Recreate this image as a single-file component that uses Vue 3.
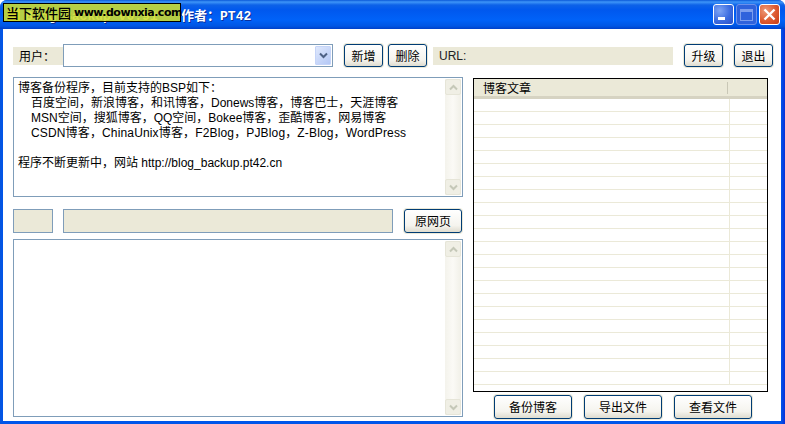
<script setup>
const intro = [
  { text: '博客备份程序，目前支持的BSP如下：', kind: '' },
  { text: '百度空间，新浪博客，和讯博客，Donews博客，博客巴士，天涯博客', kind: 'indent' },
  { text: 'MSN空间，搜狐博客，QQ空间，Bokee博客，歪酷博客，网易博客', kind: 'indent' },
  { text: 'CSDN博客，ChinaUnix博客，F2Blog，PJBlog，Z-Blog，WordPress', kind: 'indent wide' },
  { text: '\u00a0', kind: '' },
  { text: '程序不断更新中，网站 http://blog_backup.pt42.cn', kind: '' }
]
const rows = Array.from({ length: 22 }, (_, i) => i)
</script>

<template>
  <div class="window">
    <header class="titlebar">
      <svg class="app-icon" width="16" height="16" viewBox="0 0 16 16"><rect x="2" y="2" width="12" height="12" fill="#e8c94a"/></svg>
      <span class="title">Blog Backup v0.91 &nbsp;&nbsp;作者：PT42</span>
      <div class="controls">
        <button class="wc wc-min"><i></i></button>
        <button class="wc wc-max"><i></i></button>
        <button class="wc wc-close">
          <svg width="13" height="13" viewBox="0 0 13 13"><path d="M1.5 1.5l10 10M11.5 1.5l-10 10" stroke="#fff" stroke-width="2.4" fill="none"/></svg>
        </button>
      </div>
      <div class="stamp"><span class="stamp-name">当下软件园</span><span class="stamp-url">www.downxia.com</span></div>
    </header>

    <main class="client">
      <section class="toolbar">
        <label class="user-label">用户：</label>
        <div class="combo">
          <span class="combo-btn">
            <svg width="9" height="7" viewBox="0 0 9 7"><path d="M1 1.5l3.5 3.5L8 1.5" stroke="#4d6185" stroke-width="2" fill="none"/></svg>
          </span>
        </div>
        <button class="btn small first">新增</button>
        <button class="btn small">删除</button>
        <div class="url">URL:</div>
        <button class="btn small upgrade">升级</button>
        <button class="btn small exit">退出</button>
      </section>

      <section class="panes">
        <div class="left">
          <div class="textbox intro">
            <div class="text">
              <div v-for="(l, i) in intro" :key="i" :class="l.kind">{{ l.text }}</div>
            </div>
            <div class="scroll">
              <span class="arrow"><svg width="9" height="7" viewBox="0 0 9 7"><path d="M1 5.5L4.5 2 8 5.5" stroke="#c5c8b8" stroke-width="2" fill="none"/></svg></span>
              <span class="arrow"><svg width="9" height="7" viewBox="0 0 9 7"><path d="M1 1.5L4.5 5 8 1.5" stroke="#c5c8b8" stroke-width="2" fill="none"/></svg></span>
            </div>
          </div>
          <div class="midrow">
            <div class="field f1"></div>
            <div class="field f2"></div>
            <button class="btn page">原网页</button>
          </div>
          <div class="textbox content">
            <div class="text"></div>
            <div class="scroll">
              <span class="arrow"><svg width="9" height="7" viewBox="0 0 9 7"><path d="M1 5.5L4.5 2 8 5.5" stroke="#c5c8b8" stroke-width="2" fill="none"/></svg></span>
              <span class="arrow"><svg width="9" height="7" viewBox="0 0 9 7"><path d="M1 1.5L4.5 5 8 1.5" stroke="#c5c8b8" stroke-width="2" fill="none"/></svg></span>
            </div>
          </div>
        </div>

        <div class="right">
          <div class="list">
            <div class="list-head">
              <span class="col-a">博客文章</span>
              <span class="col-b"></span>
            </div>
            <div class="list-body">
              <div v-for="r in rows" :key="r" class="list-row"><span class="cell-a"></span><span class="cell-b"></span></div>
            </div>
          </div>
          <div class="actions">
            <button class="btn action">备份博客</button>
            <button class="btn action">导出文件</button>
            <button class="btn action">查看文件</button>
          </div>
        </div>
      </section>
    </main>
  </div>
</template>

<style>
html, body { margin: 0; padding: 0; background: #fff; overflow: hidden; }
</style>

<style scoped>
.window {
  width: 785px;
  height: 424px;
  box-sizing: border-box;
  display: flex;
  flex-direction: column;
  font-family: "Liberation Sans", "Noto Sans CJK SC", sans-serif;
  font-size: 12px;
  color: #000;
  background: linear-gradient(90deg, #0855dd 0, #0055ea 3px, #0055ea 781px, #0831d9 785px);
  border-radius: 7px 7px 0 0;
  overflow: hidden;
}
.titlebar {
  position: relative;
  height: 29px;
  flex: none;
  display: flex;
  align-items: center;
  padding: 0 5px 0 6px;
  background: linear-gradient(180deg, #0a58d8 0, #3e95f8 2px, #0d62e8 5px, #0058ee 10px, #0062f8 20px, #0056e4 26px, #0040c8 29px);
}
.app-icon { flex: none; }
.title {
  margin-left: 3px;
  font-family: "Liberation Mono", "Noto Sans CJK SC", monospace;
  font-size: 13px;
  font-weight: 700;
  color: #fff;
  white-space: pre;
  text-shadow: 1px 1px 0 #0a2f9c;
  flex: 1;
}
.controls { display: flex; gap: 2px; margin-right: 0; }
.wc {
  width: 21px;
  height: 21px;
  padding: 0;
  border: 1px solid #fff;
  border-radius: 3px;
  display: flex;
  align-items: center;
  justify-content: center;
  position: relative;
}
.wc-min { background: radial-gradient(circle at 30% 30%, #7fa5f4 0, #3c6ce0 55%, #2a4fc8 100%); }
.wc-min i { width: 7px; height: 3px; background: #fff; margin-top: 8px; margin-right: 4px; }
.wc-max { background: #2f62dc; border-color: #6c90ea; }
.wc-max i { width: 13px; height: 12px; border: 1px solid #7c9eee; border-top-width: 3px; box-sizing: border-box; }
.wc-close { background: radial-gradient(circle at 30% 30%, #ed9a78 0, #dd5a30 55%, #c63c16 100%); }
.stamp {
  position: absolute;
  left: 3px;
  top: 3px;
  width: 178px;
  height: 19px;
  box-sizing: border-box;
  border: 1px solid #000;
  background: rgba(206, 222, 46, 0.88);
  display: flex;
  align-items: center;
  padding-left: 2px;
  white-space: nowrap;
  color: #000;
}
.stamp-name { font-size: 13px; font-weight: 500; }
.stamp-url { margin-left: 3px; font-family: "DejaVu Sans", sans-serif; font-size: 11px; font-weight: 700; letter-spacing: -0.5px; }

.client {
  flex: 1;
  margin: 0 4px 3px 3px;
  background: #fff;
  padding: 15px 8px 2px 10px;
  display: flex;
  flex-direction: column;
  min-height: 0;
}
.toolbar { display: flex; align-items: center; height: 23px; flex: none; }
.user-label {
  width: 50px;
  height: 18px;
  background: #ebe9d8;
  display: flex;
  align-items: center;
  padding-left: 6px;
  box-sizing: border-box;
}
.combo {
  width: 270px;
  height: 23px;
  box-sizing: border-box;
  border: 1px solid #7f9db9;
  background: #fff;
  display: flex;
  justify-content: flex-end;
  align-items: stretch;
  padding: 1px;
}
.combo-btn {
  width: 16px;
  background: linear-gradient(135deg, #dfe8fc, #b4c8f6);
  border: 1px solid #c5d4f8;
  box-sizing: border-box;
  display: flex;
  align-items: center;
  justify-content: center;
  border-radius: 1px;
}
.btn {
  font-family: inherit;
  font-size: 12px;
  padding: 0 0 1px;
  color: #000;
  background: linear-gradient(180deg, #fff 0, #f5f4ee 70%, #dfdccf 100%);
  border: 1px solid #003c74;
  border-radius: 3px;
  box-shadow: 0 0 0 1px #ebe9d8;
  box-sizing: border-box;
}
.small { width: 39px; height: 23px; flex: none; }
.first { margin-left: 11px; margin-right: 5px; }
.url {
  margin-left: 6px;
  width: 240px;
  height: 18px;
  background: #ebe9d8;
  padding-left: 6px;
  box-sizing: border-box;
  line-height: 18px;
  color: #222;
}
.upgrade { margin-left: 11px; }
.exit { margin-left: 11px; }

.panes { flex: 1; display: flex; min-height: 0; margin-top: 10px; }
.left { width: 450px; flex: none; display: flex; flex-direction: column; }
.textbox {
  border: 1px solid #7f9db9;
  box-sizing: border-box;
  display: flex;
  background: #fff;
}
.intro { height: 120px; flex: none; }
.content { height: 178px; flex: none; margin-top: 6px; }
.text { flex: 1; padding: 3px 4px 0; line-height: 15px; white-space: nowrap; overflow: hidden; }
.indent { padding-left: 13px; }
.wide { letter-spacing: 0.15px; }
.scroll {
  width: 16px;
  margin: 1px;
  flex: none;
  background: linear-gradient(90deg, #f4f3ec, #fbfaf6 50%, #f1f0e8);
  display: flex;
  flex-direction: column;
  justify-content: space-between;
}
.arrow {
  height: 16px;
  background: #f0efe5;
  border: 1px solid #e6e5d8;
  border-radius: 2px;
  box-sizing: border-box;
  display: flex;
  align-items: center;
  justify-content: center;
}
.midrow { display: flex; height: 24px; flex: none; margin-top: 12px; }
.field { border: 1px solid #7f9db9; background: #ebe9d8; box-sizing: border-box; height: 24px; }
.f1 { width: 40px; }
.f2 { width: 330px; margin-left: 10px; }
.page { width: 58px; height: 24px; margin-left: 11px; }

.right { width: 295px; margin-left: 10px; flex: none; display: flex; flex-direction: column; margin-top: 1px; }
.list {
  height: 314px;
  flex: none;
  box-sizing: border-box;
  border: 1px solid #000;
  background: #fff;
  overflow: hidden;
}
.list-head {
  height: 20px;
  display: flex;
  box-sizing: border-box;
  background: #ebe9d8;
  border-bottom: 3px solid #d6d3c2;
}
.col-a { width: 254px; flex: none; padding: 1px 0 0 9px; box-sizing: border-box; border-right: 1px solid #c9c7b6; margin: 3px 0 2px; line-height: 13px; }
.list-body { display: flex; flex-direction: column; }
.list-row { height: 13px; flex: none; display: flex; box-sizing: border-box; border-bottom: 1px solid #ebe9d8; }
.cell-a { width: 256px; flex: none; border-right: 1px solid #ebe9d8; box-sizing: border-box; }
.actions { display: flex; gap: 12px; margin-top: 3px; padding-left: 21px; }
.action { width: 78px; height: 24px; flex: none; }
</style>
